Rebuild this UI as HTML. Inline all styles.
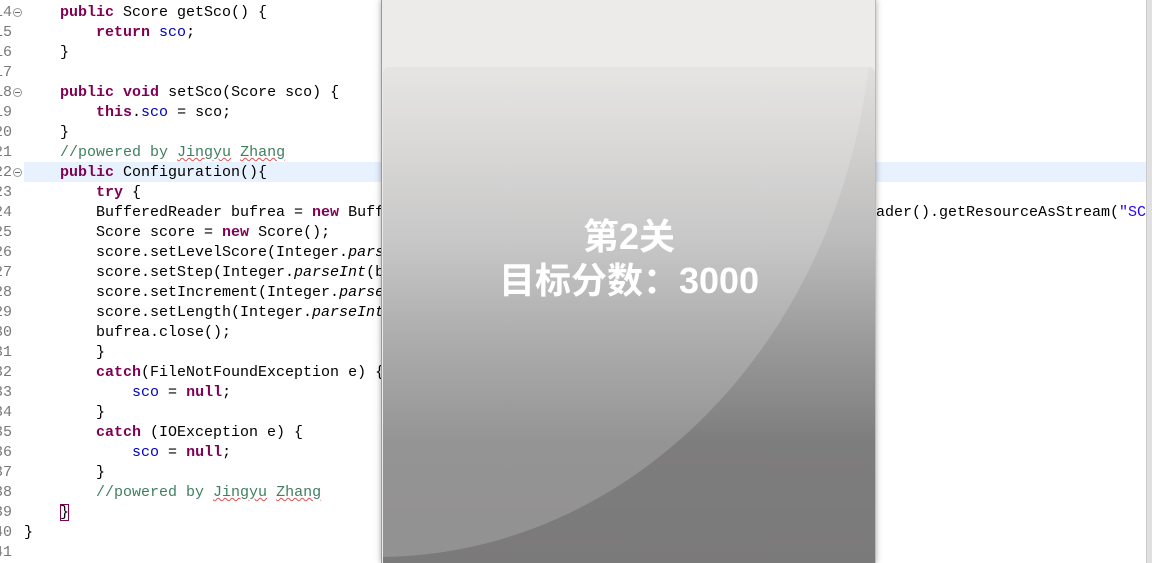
<!DOCTYPE html>
<html><head><meta charset="utf-8"><style>
body{margin:0;width:1152px;height:563px;overflow:hidden;background:#fff;position:relative;font-family:"Liberation Mono",monospace;font-size:15px}
.l{position:absolute;left:0;height:20px;line-height:20px;white-space:pre;color:#000}
.n{position:absolute;left:-20px;width:32px;text-align:right;color:#787878}
.c{position:absolute;left:24px}
.k{color:#7f0055;font-weight:bold}
.f{color:#0000c0}
.cm{color:#3f7f5f}
.s{color:#2a00ff}
.sq{text-decoration:underline wavy #e05050;text-decoration-thickness:1px}
.fold{position:absolute;left:13px;top:5px;width:7px;height:7px;border:1px solid #999;border-radius:50%;font-size:0}
.fold:after{content:"";position:absolute;left:1px;top:3px;width:5px;height:1px;background:#666}
#hl{position:absolute;left:24px;top:162px;width:1122px;height:20px;background:#e8f2fe}
#sb{position:absolute;left:1146px;top:0;width:6px;height:563px;background:#e0e0e0;border-left:1px solid #ccc}
#dlg{position:absolute;left:381px;top:0;width:493px;height:563px;background:#ecebe9;border-left:1px solid #999;border-right:1px solid #bbb;box-shadow:0 0 6px rgba(0,0,0,.35);overflow:hidden}
#pan{position:absolute;left:1px;top:67px;width:492px;height:500px;border-radius:6px 6px 0 0;background:linear-gradient(#e0dfde 0%,#d2d1d0 15%,#bcbbbb 35%,#9b9a9a 55%,#7e7d7d 75%,#7b7a7a 100%);overflow:hidden}
#gl{position:absolute;left:-500px;top:-640px;width:990px;height:1130px;border-radius:50%;background:rgba(255,255,255,.18)}
#t{position:absolute;left:0;width:100%;top:148px;text-align:center;color:#fff;font-family:"Liberation Sans","Noto Sans CJK SC",sans-serif;font-weight:bold;font-size:36px;line-height:44px}
</style></head><body>
<div id="hl"></div>
<div class="l" style="top:3px"><span class="n">14</span><span class="fold"></span><span class="c">    <span class="k">public</span> Score getSco() {</span></div>
<div class="l" style="top:23px"><span class="n">15</span><span class="c">        <span class="k">return</span> <span class="f">sco</span>;</span></div>
<div class="l" style="top:43px"><span class="n">16</span><span class="c">    }</span></div>
<div class="l" style="top:63px"><span class="n">17</span></div>
<div class="l" style="top:83px"><span class="n">18</span><span class="fold"></span><span class="c">    <span class="k">public</span> <span class="k">void</span> setSco(Score sco) {</span></div>
<div class="l" style="top:103px"><span class="n">19</span><span class="c">        <span class="k">this</span>.<span class="f">sco</span> = sco;</span></div>
<div class="l" style="top:123px"><span class="n">20</span><span class="c">    }</span></div>
<div class="l" style="top:143px"><span class="n">21</span><span class="c">    <span class="cm">//powered by <span class="sq">Jingyu</span> <span class="sq">Zhang</span></span></span></div>
<div class="l" style="top:163px"><span class="n">22</span><span class="fold"></span><span class="c">    <span class="k">public</span> Configuration(){</span></div>
<div class="l" style="top:183px"><span class="n">23</span><span class="c">        <span class="k">try</span> {</span></div>
<div class="l" style="top:203px"><span class="n">24</span><span class="c">        BufferedReader bufrea = <span class="k">new</span> BufferedReader</span><span style="position:absolute;left:876px">ader().getResourceAsStream(<span class="s">"SCM</span></span></div>
<div class="l" style="top:223px"><span class="n">25</span><span class="c">        Score score = <span class="k">new</span> Score();</span></div>
<div class="l" style="top:243px"><span class="n">26</span><span class="c">        score.setLevelScore(Integer.<i>parseInt</i>(bufrea.readLine()));</span></div>
<div class="l" style="top:263px"><span class="n">27</span><span class="c">        score.setStep(Integer.<i>parseInt</i>(bufrea.readLine()));</span></div>
<div class="l" style="top:283px"><span class="n">28</span><span class="c">        score.setIncrement(Integer.<i>parseInt</i>(bufrea.readLine()));</span></div>
<div class="l" style="top:303px"><span class="n">29</span><span class="c">        score.setLength(Integer.<i>parseInt</i>(bufrea.readLine()));</span></div>
<div class="l" style="top:323px"><span class="n">30</span><span class="c">        bufrea.close();</span></div>
<div class="l" style="top:343px"><span class="n">31</span><span class="c">        }</span></div>
<div class="l" style="top:363px"><span class="n">32</span><span class="c">        <span class="k">catch</span>(FileNotFoundException e) {</span></div>
<div class="l" style="top:383px"><span class="n">33</span><span class="c">            <span class="f">sco</span> = <span class="k">null</span>;</span></div>
<div class="l" style="top:403px"><span class="n">34</span><span class="c">        }</span></div>
<div class="l" style="top:423px"><span class="n">35</span><span class="c">        <span class="k">catch</span> (IOException e) {</span></div>
<div class="l" style="top:443px"><span class="n">36</span><span class="c">            <span class="f">sco</span> = <span class="k">null</span>;</span></div>
<div class="l" style="top:463px"><span class="n">37</span><span class="c">        }</span></div>
<div class="l" style="top:483px"><span class="n">38</span><span class="c">        <span class="cm">//powered by <span class="sq">Jingyu</span> <span class="sq">Zhang</span></span></span></div>
<div class="l" style="top:503px"><span class="n">39</span><span class="c">    <span style="outline:1px solid #7f0055;outline-offset:-1px">}</span></span></div>
<div class="l" style="top:523px"><span class="n">40</span><span class="c">}</span></div>
<div class="l" style="top:543px"><span class="n">41</span></div>
<div id="sb"></div>
<div id="dlg"><div id="pan"><div id="gl"></div><div id="t">第2关<br>目标分数：3000</div></div></div>
</body></html>
